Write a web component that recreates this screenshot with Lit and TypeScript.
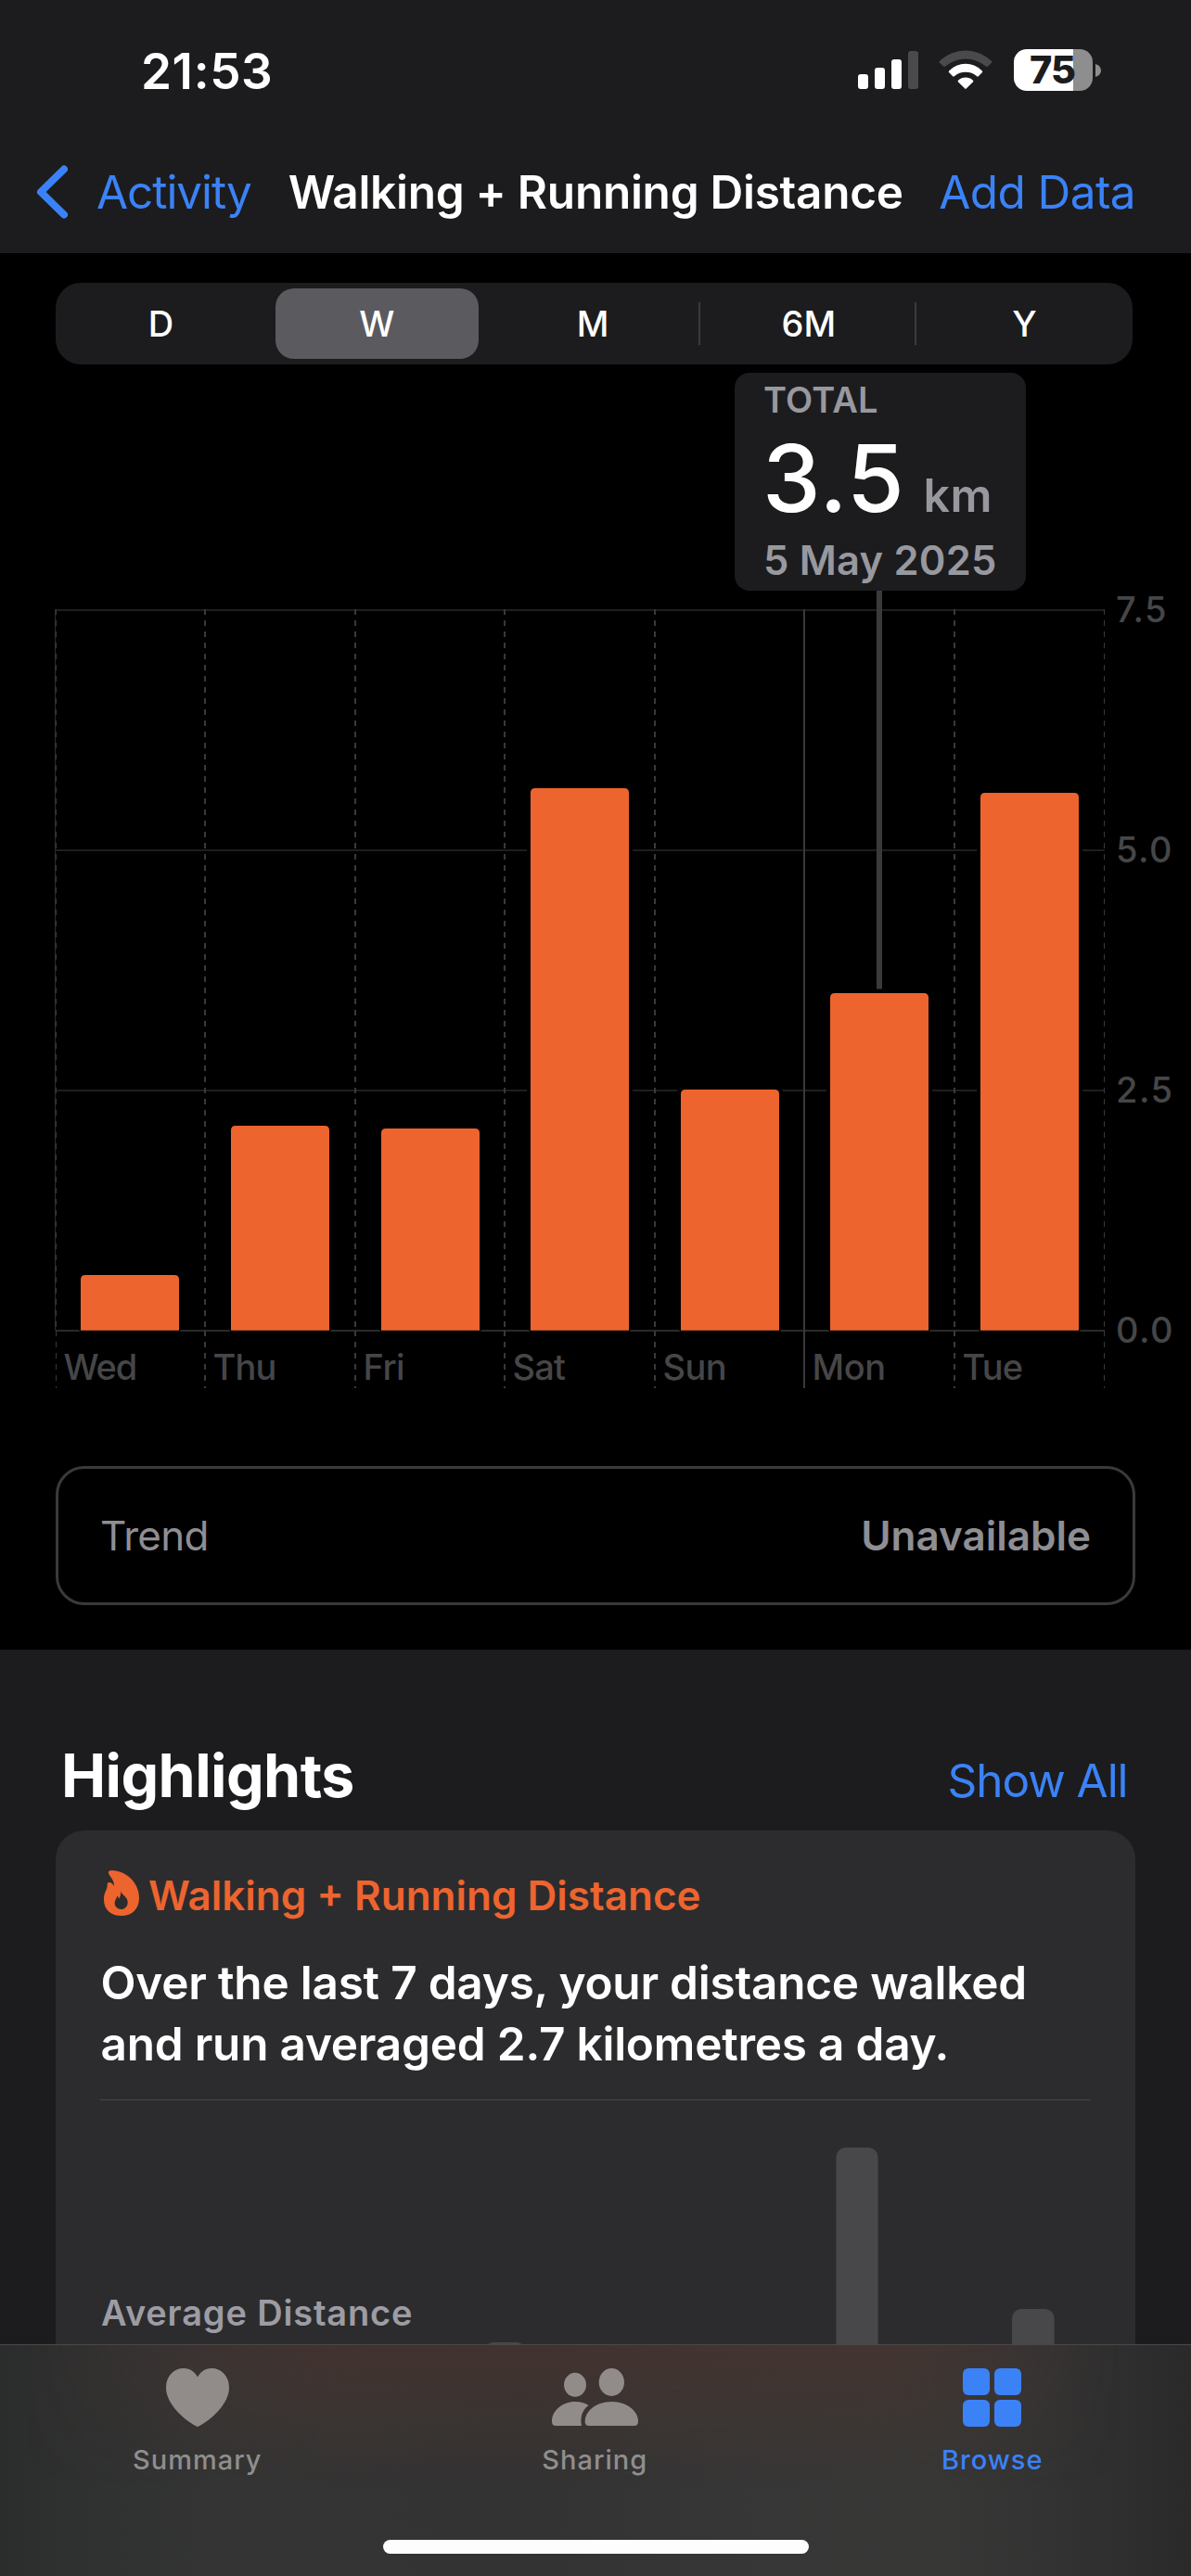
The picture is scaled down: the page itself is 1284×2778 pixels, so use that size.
import { LitElement, html, css, svg } from "lit";
import { customElement, property } from "lit/decorators.js";
import { classMap } from "lit/directives/class-map.js";

const FONT = css`Inter, "Liberation Sans", sans-serif`;

@customElement("status-bar")
class StatusBar extends LitElement {
  static styles = css`
    :host { display: block; }
    .bar { display: flex; align-items: center; height: 154px; box-sizing: border-box; padding: 0 97px 0 152px; }
    .time { font: 600 53px/60px ${FONT}; letter-spacing: 0.6px; color: #fff; }
    .icons { display: flex; margin: 0 0 3px auto; }
    .wifi { margin: 0 23px 0 22px; }
    svg { display: block; }
    .battery { display: flex; align-items: center; gap: 3px; }
    .cell { width: 85px; height: 45px; box-sizing: border-box; padding-left: 17px; border-radius: 14px; background: linear-gradient(to right, #fff 64px, #8e8e8f 64px); font: 800 41.5px/45px ${FONT}; letter-spacing: -1px; color: #1c1c1e; }
  `;
  render() {
    return html`
      <div class="bar">
        <span class="time">21:53</span>
        <div class="icons">
          <svg width="65" height="45" viewBox="0 0 65 45">
            <rect x="0" y="27" width="11" height="16" rx="3" fill="#fff" />
            <rect x="18" y="20" width="11" height="23" rx="3" fill="#fff" />
            <rect x="36" y="11" width="11" height="32" rx="3" fill="#fff" />
            <rect x="54" y="2" width="11" height="41" rx="3" fill="#4a4a4c" />
          </svg>
          <svg class="wifi" width="58" height="45" viewBox="0 0 58 45">
            <path fill="#4a4a4c" d="M.8 14.6Q0 13.7.9 12.900A40.500 40.500 0 0 1 57.100 12.900Q58 13.700 57.200 14.600L52.700 18.800Q52 19.400 51.200 18.700A34.400 34.400 0 0 0 6.800 18.700Q6 19.400 5.300 18.800Z" />
            <path fill="#fff" d="M11 25Q10.300 24.200 11.100 23.400A24.800 24.800 0 0 1 46.900 23.400Q47.700 24.200 47 25L42.800 29.300Q42 30 41.200 29.300A18.900 18.900 0 0 0 16.800 29.300Q16 30 15.200 29.300Z" />
            <path fill="#fff" d="M20.900 35.200Q20.200 34.400 21 33.700A11.500 11.500 0 0 1 37 33.700Q37.800 34.400 37.100 35.200L29.700 42.600Q29 43.200 28.300 42.600Z" />
          </svg>
          <div class="battery">
            <div class="cell">75</div>
            <svg width="6" height="14" viewBox="0 0 6 14"><path fill="#8e8e8f" d="M0 0Q6 2 6 7T0 14Z" /></svg>
          </div>
        </div>
      </div>
    `;
  }
}

@customElement("nav-bar")
class NavBar extends LitElement {
  static styles = css`
    :host { display: block; }
    .bar { display: flex; align-items: center; height: 106px; box-sizing: border-box; margin-bottom: 13px; padding: 0 60px 0 39px; white-space: nowrap; }
    .back { display: flex; align-items: center; gap: 31px; }
    .link { font: 400 49.5px/60px ${FONT}; color: #3b82f6; }
    .backtext { letter-spacing: -1.08px; }
    .title { margin-left: 40px; font: 600 49.5px/60px ${FONT}; letter-spacing: -0.27px; color: #fff; }
    .add { margin-left: auto; letter-spacing: -0.59px; }
  `;
  render() {
    return html`
      <div class="bar">
        <div class="back">
          <svg width="34" height="58" viewBox="0 0 34 58">
            <path d="M30 4.500L5 29L30 53.500" fill="none" stroke="#3b82f6" stroke-width="8" stroke-linecap="round" stroke-linejoin="round" />
          </svg>
          <span class="link backtext">Activity</span>
        </div>
        <span class="title">Walking + Running Distance</span>
        <span class="link add">Add Data</span>
      </div>
    `;
  }
}

@customElement("range-picker")
class RangePicker extends LitElement {
  @property() selected = "W";
  static styles = css`
    :host { display: block; padding: 32px 63px 0 60px; }
    .track { height: 88px; border-radius: 27px; background: #1c1c1e; }
    .items { display: grid; grid-template-columns: repeat(5, 1fr); height: 100%; margin-left: -3px; }
    .item { display: flex; align-items: center; justify-content: center; margin: 6px 7px; border-radius: 20px; font: 500 38px/50px ${FONT}; color: #fff; }
    .on { background: #5b5a5f; }
    .cell { display: grid; background: no-repeat left center / 2px 46px; }
    .ruled { margin-left: -2px; padding-left: 2px; background-image: linear-gradient(#3b3b3d, #3b3b3d); }
  `;
  render() {
    return html`
      <div class="track">
        <div class="items">
          ${["D", "W", "M", "6M", "Y"].map(
            (r, i) => html`<div class=${classMap({ cell: true, ruled: i > 2 })}>
              <div class=${classMap({ item: true, on: r === this.selected })}>${r}</div>
            </div>`
          )}
        </div>
      </div>
    `;
  }
}

const TOP = 264;
const BASE = 1042;
const FOOT = 1104;
const days = [
  { name: "Wed", line: 60, bar: 87, top: 982, ls: -1.1 },
  { name: "Thu", line: 220, bar: 249, top: 821, ls: -0.83 },
  { name: "Fri", line: 382, bar: 411, top: 824, ls: -0.5 },
  { name: "Sat", line: 543, bar: 572, top: 457, ls: -0.8 },
  { name: "Sun", line: 705, bar: 734, top: 782, ls: -0.6 },
  { name: "Mon", line: 866, bar: 895, top: 678, ls: -0.4 },
  { name: "Tue", line: 1028, bar: 1057, top: 462, ls: -0.8 },
];
const ticks = [
  { label: "7.5", y: 264 },
  { label: "5.0", y: 523 },
  { label: "2.5", y: 782 },
  { label: "0.0", y: 1041 },
];

/* Vertical divider; the dash pattern restarts below the baseline. */
const divider = (x: number, width: number, solid = false) => svg`
  <path d="M${x} ${TOP}V${BASE}M${x} ${BASE}V${FOOT}" fill="none" stroke="#39393b" stroke-width=${width}
    stroke-dasharray=${solid ? "none" : "6 6"} />`;

@customElement("distance-chart")
class DistanceChart extends LitElement {
  static styles = css`
    :host { display: block; position: relative; }
    svg { display: block; }
    .axis { font: 500 38px ${FONT}; fill: #464648; }
    .num { letter-spacing: 1.49px; }
    .tip { position: absolute; left: 792px; top: 9px; width: 314px; height: 235px; box-sizing: border-box; padding: 9px 0 0 31px; border-radius: 16px; background: #1c1c1e; color: #98989f; white-space: nowrap; }
    .kind { font: 600 38px/40px ${FONT}; letter-spacing: 0.17px; }
    .value { display: flex; align-items: baseline; gap: 20px; height: 100px; margin: 15px 0 16px -1px; }
    .figure { font: 500 100px/100px ${FONT}; letter-spacing: 0.68px; color: #fff; }
    .unit { font: 600 50px/50px ${FONT}; letter-spacing: 0.53px; }
    .date { font: 600 43.5px/45px ${FONT}; letter-spacing: 0.21px; }
  `;
  render() {
    return html`
      <svg width="1284" height="1188" viewBox="0 0 1284 1188">
        ${ticks.map(
          (t) => svg`
            <rect x="60" y=${t.y} width="1131" height="2" fill=${t.y > 1000 ? "#2a2a2b" : "#1e1e1f"} />
            <text class="axis num" x="1203" y=${t.y + 14}>${t.label}</text>`
        )}
        ${days.map(
          (d) => svg`
            <rect x=${d.bar - 4} y=${d.top - 4} width="114" height=${BASE + 6 - d.top} rx="8" fill="#000" />`
        )}
        <rect x="59" y=${TOP} width="1" height="778" fill="#2c2c2e" />
        ${days.map(
          (d) => svg`
            ${d.line === 60 ? divider(60.5, 1) : divider(d.line + 1, 2, d.name === "Mon")}
            <path d="M${d.bar} ${BASE}V${d.top + 5}q0-5 5-5h96q5 0 5 5V${BASE}Z" fill="#ed642f" />
            <rect x=${d.bar} y="1041" width="106" height="1" fill="#b1502a" />
            <text class="axis" x=${(d.line === 60 ? 59 : d.line) + 9.5} y="1095" letter-spacing=${d.ls}>${d.name}</text>`
        )}
        ${divider(1190.5, 1)}
        <rect x="945" y="240" width="6" height="433.500" fill="#3a3a3c" />
      </svg>
      <div class="tip">
        <div class="kind">TOTAL</div>
        <div class="value"><span class="figure">3.5</span><span class="unit">km</span></div>
        <div class="date">5 May 2025</div>
      </div>
    `;
  }
}

@customElement("trend-row")
class TrendRow extends LitElement {
  static styles = css`
    :host { display: block; padding: 0 60px 48px; }
    .box { display: flex; align-items: center; justify-content: space-between; height: 150px; box-sizing: border-box; padding: 0 45px; border: 3px solid #3a3a3c; border-radius: 31px; color: #8e8e93; }
    .name { font: 400 44px/50px ${FONT}; letter-spacing: -0.7px; }
    .state { font: 600 44px/50px ${FONT}; }
  `;
  render() {
    return html`<div class="box"><span class="name">Trend</span><span class="state">Unavailable</span></div>`;
  }
}

@customElement("highlights-section")
class HighlightsSection extends LitElement {
  static styles = css`
    :host { display: block; height: 749px; overflow: hidden; background: #1c1c1e; white-space: nowrap; }
    .head { display: flex; align-items: baseline; justify-content: space-between; height: 70px; padding: 100.5px 68.5px 24.5px 66px; }
    .h { font: 700 64.5px/70px ${FONT}; letter-spacing: -0.6px; color: #fff; }
    .all { font: 400 49.5px/50px ${FONT}; letter-spacing: -1.06px; color: #3b82f6; }
    .card { height: 800px; box-sizing: border-box; margin: 0 60px; padding: 45px 48px 0; border-radius: 31px; background: #2c2c2e; }
    .kind { display: flex; align-items: center; height: 50px; gap: 10px; padding-left: 4px; font: 600 44px/50px ${FONT}; color: #ed642f; }
    .flame { margin-bottom: 5px; }
    .msg { margin-top: 36px; padding-left: 0.5px; font: 600 49.5px/66px ${FONT}; letter-spacing: -0.22px; color: #fff; }
    .rule { height: 1px; margin-top: 27px; background: #464648; }
    .mini { position: relative; height: 500px; }
    .bars { position: absolute; inset: 0; }
    .avg { position: relative; padding: 203.5px 0 0 1px; font: 600 38px/50px ${FONT}; letter-spacing: 0.83px; color: #9d9ca4; }
  `;
  render() {
    return html`
      <div class="head"><span class="h">Highlights</span><span class="all">Show All</span></div>
      <div class="card">
        <div class="kind">
          <svg class="flame" width="38" height="49" viewBox="0 0 114 147">
            <path fill="#ed642f" fill-rule="evenodd" d="M16 12C12 4 18 0 26 0C74 3 114 40 114 90C114 126 90 147 57 147C24 147 0 127 0 95C0 72 9 66 11 52C11 46 10 39 17 39C24 39 30 45 33 51C34 36 25 26 16 12ZM55 67C57 82 78 84 77 105C76 118 67 126 56 126C44 126 35 118 35 106C35 96 41 91 43 83C47 85 48 89 48 93C54 85 55 76 55 67Z" />
          </svg>
          <span>Walking + Running Distance</span>
        </div>
        <div class="msg">Over the last 7 days, your distance walked<br />and run averaged 2.7 kilometres a day.</div>
        <div class="rule"></div>
        <div class="mini">
          <svg class="bars" width="1068" height="500" viewBox="0 0 1068 500" fill="#48484a">
            <rect x="414" y="261" width="45" height="240" rx="10" />
            <rect x="793.500" y="51" width="45" height="450" rx="10" />
            <rect x="983" y="225" width="45.500" height="276" rx="10" />
          </svg>
          <div class="avg">Average Distance</div>
        </div>
      </div>
    `;
  }
}

@customElement("tab-bar")
class TabBar extends LitElement {
  static styles = css`
    :host { display: block; position: relative; height: 250px; box-sizing: border-box; border-top: 1px solid #4a4848;
      background: linear-gradient(to right, #2b2c2c 0, #303131 8%, #343434 18%, #333333 45%, #363636 62%, #373736 78%, #333333 88%, #2a2a2a 100%); }
    .glow { position: absolute; inset: 0 0 auto 0; height: 150px;
      background: linear-gradient(rgba(86, 50, 42, 0.42), rgba(86, 54, 42, 0.22) 50%, rgba(86, 54, 42, 0));
      -webkit-mask-image: linear-gradient(to right, transparent 2%, #000 28%, #000 74%, transparent 94%);
      mask-image: linear-gradient(to right, transparent 2%, #000 28%, #000 74%, transparent 94%); }
    .tabs { position: relative; display: grid; grid-template-columns: repeat(3, 1fr); margin: 0 0 0 -1.5px; padding-top: 25px; color: #918c8a; }
    .tab { display: flex; flex-direction: column; align-items: center; gap: 16px; font: 500 29px/40px ${FONT}; letter-spacing: 1px; }
    .icon { display: flex; align-items: flex-start; height: 63px; fill: currentColor; }
    .label { color: #8f8e8d; }
    .on, .on .label { color: #3b82f6; }
    .home { position: relative; width: 459px; height: 15px; margin: 66px auto 0; border-radius: 8px; background: #fdfdfd; }
  `;
  render() {
    return html`
      <div class="glow"></div>
      <div class="tabs">
        <div class="tab">
          <span class="icon"><svg width="68" height="63" viewBox="0 0 68 63">
            <path d="M34 63C31.500 63 0 43.500 0 21C0 8 8.500 0 19 0C26 0 31 4 34 9.500C37 4 42 0 49 0C59.500 0 68 8 68 21C68 43.500 36.500 63 34 63Z" />
          </svg></span>
          <span class="label">Summary</span>
        </div>
        <div class="tab">
          <span class="icon"><svg width="93" height="62" viewBox="42 42 279 186">
            <ellipse cx="117" cy="95.500" rx="36" ry="39" />
            <ellipse cx="235" cy="87" rx="41" ry="45" />
            <path d="M164 228C152 228 149 222 149 213C149 185 180 150 235 150C290 150 321 185 321 213C321 222 318 228 306 228Z" />
            <path d="M57 228C45 228 42 222 42 213C42 180 75 150 117 150C134 150 149 154 161 162C141 175 132 200 138 228Z" />
          </svg></span>
          <span class="label">Sharing</span>
        </div>
        <div class="tab on">
          <span class="icon"><svg width="63" height="63" viewBox="0 0 63 63">
            <rect width="29" height="29" rx="6" /><rect x="34" width="29" height="29" rx="6" />
            <rect y="34" width="29" height="29" rx="6" /><rect x="34" y="34" width="29" height="29" rx="6" />
          </svg></span>
          <span class="label">Browse</span>
        </div>
      </div>
      <div class="home"></div>
    `;
  }
}

@customElement("app-root")
class AppRoot extends LitElement {
  static styles = css`
    :host { display: block; width: 1284px; height: 2778px; overflow: hidden; background: #000; }
    .header { background: #1c1c1e; display: flow-root; }
  `;
  render() {
    return html`
      <div class="header">
        <status-bar></status-bar>
        <nav-bar></nav-bar>
      </div>
      <range-picker></range-picker>
      <distance-chart></distance-chart>
      <trend-row></trend-row>
      <highlights-section></highlights-section>
      <tab-bar></tab-bar>
    `;
  }
}
